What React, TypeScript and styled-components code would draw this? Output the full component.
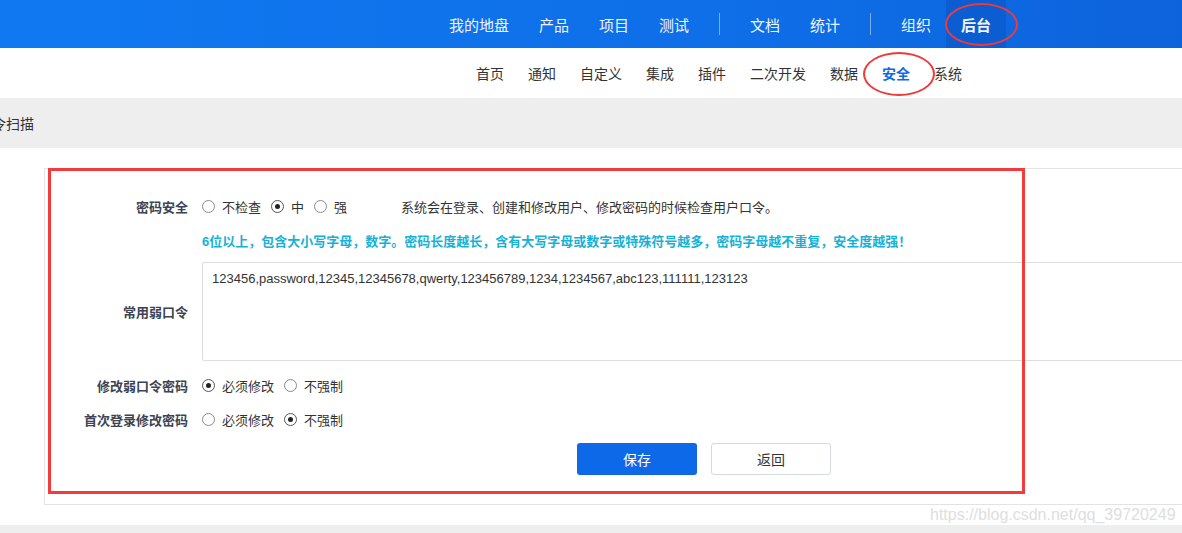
import styled, { createGlobalStyle } from 'styled-components';

const GlobalStyle = createGlobalStyle`
  body {
    margin: 0;
    background: #eeeeee;
    overflow: hidden;
    font-family: "Liberation Sans", "Noto Sans CJK SC", sans-serif;
    color: #333;
  }
`;

const mainNav = ['我的地盘', '产品', '项目', '测试', '|', '文档', '统计', '|', '组织', '后台'];
const subNav = ['首页', '通知', '自定义', '集成', '插件', '二次开发', '数据', '安全', '系统'];

const weakPasswords =
  '123456,password,12345,12345678,qwerty,123456789,1234,1234567,abc123,111111,123123';

interface RadioProps {
  options: string[];
  checked: number;
}

function RadioGroup({ options, checked }: RadioProps) {
  return (
    <Radios>
      {options.map((opt, i) => (
        <RadioLabel key={opt}>
          <RadioDot $checked={i === checked} />
          {opt}
        </RadioLabel>
      ))}
    </Radios>
  );
}

export default function App() {
  return (
    <Page>
      <GlobalStyle />
      <TopBar>
        {mainNav.map((item, i) =>
          item === '|' ? (
            <Divider key={i} />
          ) : (
            <TopItem key={item} $active={item === '后台'}>
              {item}
            </TopItem>
          )
        )}
      </TopBar>

      <SubBar>
        {subNav.map((item) => (
          <SubItem key={item} $active={item === '安全'}>
            {item}
          </SubItem>
        ))}
      </SubBar>

      <TitleBar>
        <span>令扫描</span>
      </TitleBar>

      <Content>
        <Panel>
          <Form>
            <Label $mt={0}>密码安全</Label>
            <Field $mt={0}>
              <RadioGroup options={['不检查', '中', '强']} checked={1} />
              <Hint>系统会在登录、创建和修改用户、修改密码的时候检查用户口令。</Hint>
            </Field>

            <Label $mt={10} />
            <Field $mt={10}>
              <Tip>
                6位以上，包含大小写字母，数字。密码长度越长，含有大写字母或数字或特殊符号越多，密码字母越不重复，安全度越强！
              </Tip>
            </Field>

            <Label $mt={10}>常用弱口令</Label>
            <Field $mt={10}>
              <TextArea readOnly value={weakPasswords} />
            </Field>

            <Label $mt={12}>修改弱口令密码</Label>
            <Field $mt={12}>
              <RadioGroup options={['必须修改', '不强制']} checked={0} />
            </Field>

            <Label $mt={10}>首次登录修改密码</Label>
            <Field $mt={10}>
              <RadioGroup options={['必须修改', '不强制']} checked={1} />
            </Field>

            <Actions>
              <PrimaryButton type="button">保存</PrimaryButton>
              <GhostButton type="button">返回</GhostButton>
            </Actions>
          </Form>
        </Panel>
      </Content>

      {/* red annotations drawn over the screenshot */}
      <Ellipse $x={945} $y={3} $w={73} $h={43} />
      <Ellipse $x={863} $y={52} $w={72} $h={44} />
      <Frame />
      <Watermark>https://blog.csdn.net/qq_39720249</Watermark>
    </Page>
  );
}

const Page = styled.div`
  position: relative;
  width: 1182px;
  height: 533px;
  overflow: hidden;
`;

const TopBar = styled.div`
  height: 48px;
  display: flex;
  align-items: stretch;
  justify-content: flex-end;
  padding-right: 176px;
  background: linear-gradient(90deg, #1079f1 0%, #0e6fe8 60%, #0d63dc 100%);
`;

const TopItem = styled.div<{ $active?: boolean }>`
  display: flex;
  align-items: center;
  padding: 0 15px;
  font-size: 15px;
  color: #eef4ff;
  font-weight: ${({ $active }) => ($active ? 700 : 400)};
  background: ${({ $active }) => ($active ? '#0c5dd2' : 'transparent')};
`;

const Divider = styled.div`
  align-self: center;
  width: 1px;
  height: 22px;
  margin: 0 15px;
  background: rgba(255, 255, 255, 0.45);
`;

const SubBar = styled.div`
  height: 50px;
  display: flex;
  align-items: center;
  justify-content: flex-end;
  padding-right: 208px;
  background: #fff;
`;

const SubItem = styled.div<{ $active?: boolean }>`
  padding: 0 12px;
  font-size: 14px;
  color: ${({ $active }) => ($active ? '#0f6ae8' : '#333')};
  font-weight: ${({ $active }) => ($active ? 700 : 400)};
`;

const TitleBar = styled.div`
  height: 50px;
  display: flex;
  align-items: center;
  background: #eeeeee;
  font-size: 14px;
  color: #333;

  span {
    margin-left: -8px;
  }
`;

const Content = styled.div`
  background: #fff;
  padding: 20px 0 20px 44px;
`;

const Panel = styled.div`
  width: 1318px;
  border: 1px solid #e3e3e3;
  background: #fff;
  padding: 25px 0 29px;
`;

const Form = styled.div`
  display: grid;
  grid-template-columns: 143px 1fr;
  column-gap: 14px;
`;

const Label = styled.div<{ $mt: number }>`
  margin-top: ${({ $mt }) => $mt}px;
  display: flex;
  align-items: center;
  justify-content: flex-end;
  min-height: 24px;
  font-size: 13px;
  font-weight: 700;
  color: #3c4353;
`;

const Field = styled.div<{ $mt: number }>`
  margin-top: ${({ $mt }) => $mt}px;
  display: flex;
  align-items: center;
  min-height: 24px;
  padding-right: 20px;
`;

const Radios = styled.div`
  display: flex;
  align-items: center;
  gap: 10px;
`;

const RadioLabel = styled.label`
  display: flex;
  align-items: center;
  gap: 7px;
  font-size: 13px;
  color: #333;
`;

const RadioDot = styled.span<{ $checked: boolean }>`
  position: relative;
  width: 11px;
  height: 11px;
  border-radius: 50%;
  border: 1px solid ${({ $checked }) => ($checked ? '#555' : '#8a8a8a')};
  background: #fff;

  &::after {
    content: '';
    display: ${({ $checked }) => ($checked ? 'block' : 'none')};
    position: absolute;
    left: 3px;
    top: 3px;
    width: 5px;
    height: 5px;
    border-radius: 50%;
    background: #222;
  }
`;

const Hint = styled.span`
  margin-left: 54px;
  font-size: 13px;
  color: #333;
`;

const Tip = styled.span`
  font-size: 13px;
  font-weight: 700;
  color: #17b1d6;
`;

const TextArea = styled.textarea`
  width: 100%;
  height: 99px;
  box-sizing: border-box;
  padding: 7px 9px;
  border: 1px solid #dddddd;
  border-radius: 2px;
  resize: none;
  outline: none;
  font-family: "Liberation Sans", "Noto Sans CJK SC", sans-serif;
  font-size: 13px;
  line-height: 18px;
  color: #333;
`;

const Actions = styled.div`
  grid-column: 1 / -1;
  margin-top: 12px;
  display: flex;
  justify-content: center;
  gap: 14px;
`;

const PrimaryButton = styled.button`
  width: 120px;
  height: 32px;
  border: none;
  border-radius: 3px;
  background: #0e69e8;
  color: #fff;
  font-family: inherit;
  font-size: 14px;
`;

const GhostButton = styled.button`
  width: 120px;
  height: 32px;
  border: 1px solid #d4dae3;
  border-radius: 3px;
  background: #fff;
  color: #333;
  font-family: inherit;
  font-size: 14px;
`;

const Ellipse = styled.div<{ $x: number; $y: number; $w: number; $h: number }>`
  position: absolute;
  left: ${({ $x }) => $x}px;
  top: ${({ $y }) => $y}px;
  width: ${({ $w }) => $w}px;
  height: ${({ $h }) => $h}px;
  box-sizing: border-box;
  border: 2px solid #ee3a3a;
  border-radius: 50%;
  pointer-events: none;
`;

const Frame = styled.div`
  position: absolute;
  left: 48px;
  top: 168px;
  width: 977px;
  height: 326px;
  box-sizing: border-box;
  border: 3px solid #f23c3c;
  pointer-events: none;
`;

const Watermark = styled.div`
  position: absolute;
  left: 930px;
  top: 506px;
  font-family: "Liberation Sans", sans-serif;
  font-size: 16px;
  color: #dedede;
  pointer-events: none;
`;
